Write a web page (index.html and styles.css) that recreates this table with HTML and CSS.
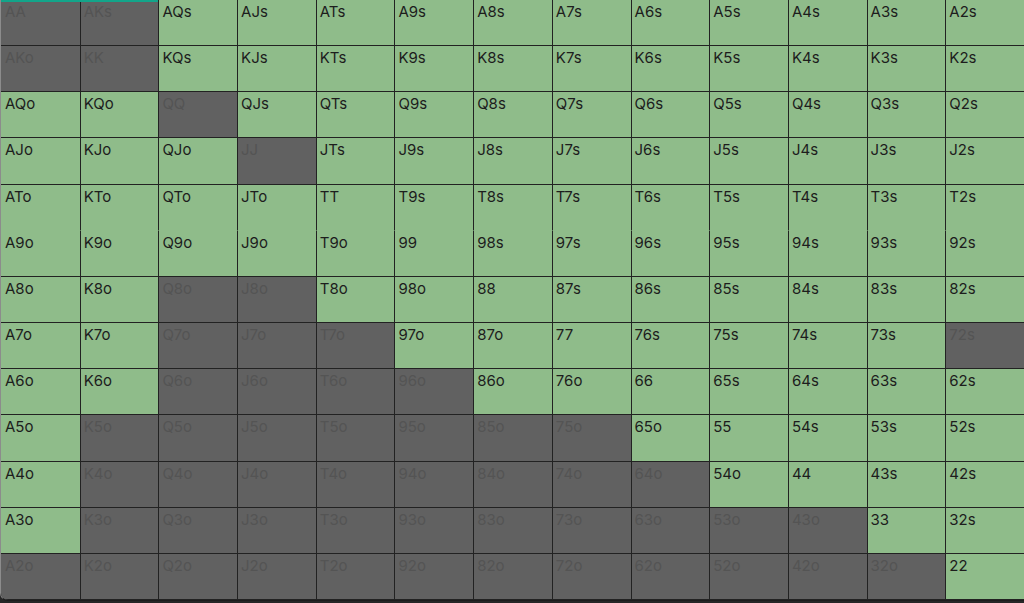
FILE: index.html
```html
<!DOCTYPE html>
<html lang="en">
<head>
    <meta charset="UTF-8">
    <meta name="viewport" content="width=device-width, initial-scale=1.0">
    <title>Hand Range</title>
    <link rel="stylesheet" href="styles.css">
</head>
<body>
    <div class="panel">
        <div class="progress"></div>
        <div class="range-grid" id="rangeGrid"></div>
    </div>

    <script>
        document.addEventListener('DOMContentLoaded', function() {
            const ranks = ['A', 'K', 'Q', 'J', 'T', '9', '8', '7', '6', '5', '4', '3', '2'];

            // Hands that are not in the range
            const folded = [
                'AA', 'AKs', 'AKo', 'KK', 'QQ', 'JJ',
                'Q8o', 'J8o',
                'Q7o', 'J7o', 'T7o', '72s',
                'Q6o', 'J6o', 'T6o', '96o',
                'K5o', 'Q5o', 'J5o', 'T5o', '95o', '85o', '75o',
                'K4o', 'Q4o', 'J4o', 'T4o', '94o', '84o', '74o', '64o',
                'K3o', 'Q3o', 'J3o', 'T3o', '93o', '83o', '73o', '63o', '53o', '43o',
                'A2o', 'K2o', 'Q2o', 'J2o', 'T2o', '92o', '82o', '72o', '62o', '52o', '42o', '32o'
            ];

            const grid = document.getElementById('rangeGrid');

            for (let i = 0; i < ranks.length; i++) {
                for (let j = 0; j < ranks.length; j++) {
                    let hand;
                    if (i === j) {
                        hand = ranks[i] + ranks[j];
                    } else if (i < j) {
                        hand = ranks[i] + ranks[j] + 's';
                    } else {
                        hand = ranks[j] + ranks[i] + 'o';
                    }

                    const cell = document.createElement('div');
                    cell.className = 'cell';
                    if (folded.indexOf(hand) !== -1) {
                        cell.classList.add('off');
                    }
                    // the ten row runs straight into the nine row
                    if (ranks[i] === 'T') {
                        cell.classList.add('joined');
                    }
                    cell.textContent = hand;
                    grid.appendChild(cell);
                }
            }
        });
    </script>
</body>
</html>
```

FILE: styles.css
```css
html, body {
    margin: 0;
    padding: 0;
}
body {
    background-color: #262626;
    font-family: Inter, "Noto Sans", sans-serif;
    height: 603px;
    overflow: hidden;
}
.panel {
    position: relative;
    height: 600px;
    border-left: 1px solid #8c8c8c;
    border-bottom: 1px solid #1c1c1c;
    border-bottom-left-radius: 8px;
    overflow: hidden;
}
.progress {
    position: absolute;
    top: 0;
    left: 0;
    width: 157px;
    height: 2px;
    background-color: #13a58a;
}
.range-grid {
    display: grid;
    grid-template-columns: repeat(13, 1fr);
    grid-template-rows: repeat(13, 1fr);
    height: 100%;
}
.cell {
    background-color: #8fbc8a;
    color: #1d1d1d;
    font-size: 15px;
    line-height: 18px;
    padding: 3px 0 0 3px;
    border-left: 1px solid #222;
    border-bottom: 1px solid #222;
    overflow: hidden;
}
.cell:nth-child(13n+1) {
    border-left: none;
    padding-left: 4px;
}
.cell.joined {
    border-bottom-color: transparent;
}
.cell.off {
    background-color: #616161;
    color: #545454;
}
```
